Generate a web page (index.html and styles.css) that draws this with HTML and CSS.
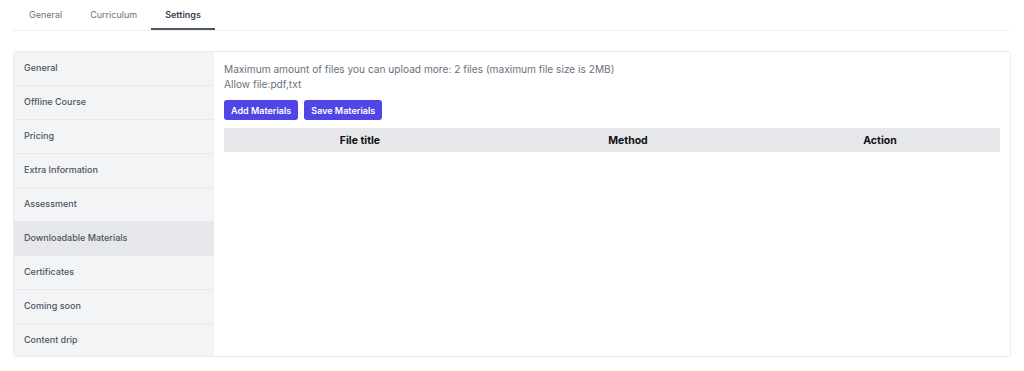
FILE: index.html
```html
<!DOCTYPE html>
<html lang="en">
<head>
<meta charset="UTF-8">
<meta name="viewport" content="width=device-width, initial-scale=1.0">
<title>Course Settings</title>
<link rel="stylesheet" href="styles.css">
</head>
<body>

<div class="page">
  <div class="tabs">
    <div class="tab">General</div>
    <div class="tab">Curriculum</div>
    <div class="tab active">Settings</div>
  </div>

  <div class="card">
    <ul class="side-menu">
      <li>General</li>
      <li>Offline Course</li>
      <li>Pricing</li>
      <li>Extra Information</li>
      <li>Assessment</li>
      <li class="active">Downloadable Materials</li>
      <li>Certificates</li>
      <li>Coming soon</li>
      <li>Content drip</li>
    </ul>

    <div class="panel">
      <p class="note">Maximum amount of files you can upload more: 2 files (maximum file size is 2MB)</p>
      <p class="note">Allow file:pdf,txt</p>
      <div class="actions">
        <button class="btn">Add Materials</button>
        <button class="btn">Save Materials</button>
      </div>
      <table class="files">
        <thead>
          <tr>
            <th class="col-title">File title</th>
            <th class="col-method">Method</th>
            <th class="col-action">Action</th>
          </tr>
        </thead>
        <tbody></tbody>
      </table>
    </div>
  </div>
</div>

</body>
</html>
```

FILE: styles.css
```css
body {
  margin: 0;
  font-family: Inter, "Noto Sans", Arial, sans-serif;
  background-color: #fff;
  color: #374151;
}
.page {
  padding: 0 13px;
}
.tabs {
  display: flex;
  padding-left: 2px;
  border-bottom: 1px solid #f0f0f0;
  height: 30px;
  margin-right: 1px;
}
.tab {
  padding: 0 14px;
  font-size: 9px;
  line-height: 30px;
  color: #6b7280;
  border-bottom: 2px solid transparent;
}
.tab.active {
  color: #374151;
  font-weight: 600;
  border-bottom-color: #4b5563;
}
.card {
  display: flex;
  margin-top: 20px;
  width: 996px;
  border: 1px solid #ececec;
  border-radius: 3px;
  overflow: hidden;
}
.side-menu {
  list-style: none;
  margin: 0;
  padding: 0;
  width: 200px;
  flex-shrink: 0;
  background-color: #f3f4f6;
}
.side-menu li {
  height: 33px;
  line-height: 32px;
  padding-left: 10px;
  font-size: 9px;
  font-weight: 500;
  color: #4b5563;
  border-bottom: 1px solid #e9eaed;
}
.side-menu li:last-child {
  border-bottom: none;
  height: 32px;
}
.side-menu li.active {
  background-color: #e5e7eb;
}
.panel {
  flex: 1;
  padding: 9px 10px 0 10px;
}
.note {
  margin: 0;
  font-size: 10.15px;
  line-height: 15px;
  color: #6b7280;
}
.note:first-child {
  margin-top: 1px;
}
.actions {
  display: flex;
  gap: 6px;
  margin-top: 8px;
}
.btn {
  height: 20px;
  padding: 0 7px;
  font-family: inherit;
  font-size: 9px;
  font-weight: 600;
  color: #fff;
  background-color: #4f46e5;
  border: none;
  border-radius: 3px;
}
.files {
  width: 776px;
  margin-top: 8px;
  border-collapse: collapse;
  table-layout: fixed;
}
.files th {
  height: 24px;
  padding: 0;
  font-size: 10.5px;
  font-weight: 700;
  color: #111;
  background-color: #e5e7eb;
}
.col-title {
  width: 272px;
}
.col-method {
  width: 264px;
}
.col-action {
  width: 240px;
}
```
